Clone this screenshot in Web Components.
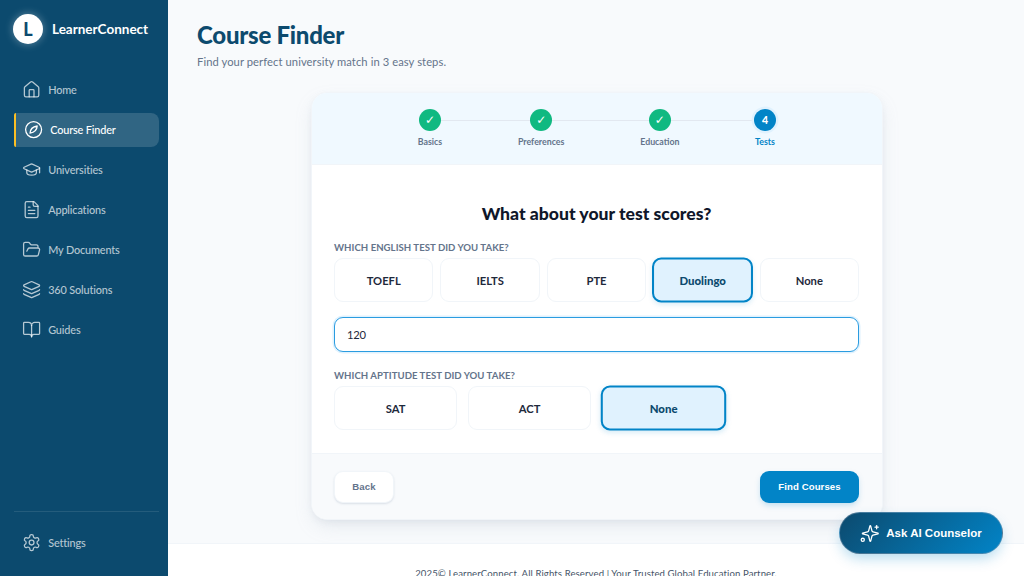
<!DOCTYPE html>
<html lang="en">
<head>
<meta charset="utf-8">
<title>Course Finder</title>
<style>
    html, body { margin: 0; height: 100%; overflow: hidden; }
    body { font-family: "Lato", "Noto Sans", sans-serif; background: #f8fafc; }
</style>
</head>
<body>
<app-shell>
    <side-bar slot="side">
        <nav-item icon="home">Home</nav-item>
        <nav-item icon="compass" active>Course Finder</nav-item>
        <nav-item icon="cap">Universities</nav-item>
        <nav-item icon="file">Applications</nav-item>
        <nav-item icon="folder">My Documents</nav-item>
        <nav-item icon="layers">360 Solutions</nav-item>
        <nav-item icon="book">Guides</nav-item>
        <nav-item slot="bottom" icon="gear">Settings</nav-item>
    </side-bar>
    <page-head title="Course Finder" sub="Find your perfect university match in 3 easy steps."></page-head>
    <finder-card>
        <step-bar slot="head">
            <step-dot label="Basics" state="done" style="width:24px"></step-dot>
            <step-dot label="Preferences" state="done" style="width:47px"></step-dot>
            <step-dot label="Education" state="done" style="width:39px"></step-dot>
            <step-dot label="Tests" n="4" state="current" style="width:20px"></step-dot>
        </step-bar>
        <choice-group label="Which English test did you take?" cols="5">
            <choice-btn>TOEFL</choice-btn>
            <choice-btn>IELTS</choice-btn>
            <choice-btn>PTE</choice-btn>
            <choice-btn selected>Duolingo</choice-btn>
            <choice-btn>None</choice-btn>
        </choice-group>
        <score-input value="120"></score-input>
        <choice-group label="Which aptitude test did you take?" cols="4">
            <choice-btn>SAT</choice-btn>
            <choice-btn>ACT</choice-btn>
            <choice-btn selected>None</choice-btn>
        </choice-group>
        <action-btn slot="foot">Back</action-btn>
        <action-btn slot="foot" primary>Find Courses</action-btn>
    </finder-card>
    <page-foot slot="foot">2025© LearnerConnect. All Rights Reserved | Your Trusted Global Education Partner.</page-foot>
    <ask-fab slot="fab">Ask AI Counselor</ask-fab>
</app-shell>

<script>
    const ICONS = {
        home: '<path d="M15 21v-8a1 1 0 0 0-1-1h-4a1 1 0 0 0-1 1v8"/><path d="M3 10a2 2 0 0 1 .709-1.528l7-5.999a2 2 0 0 1 2.582 0l7 5.999A2 2 0 0 1 21 10v9a2 2 0 0 1-2 2H5a2 2 0 0 1-2-2z"/>',
        compass: '<circle cx="12" cy="12" r="10"/><path d="M16.5 7.5c-.2 4.6-3.4 8-9 9 .2-4.6 3.4-8 9-9z"/>',
        cap: '<path d="M21.42 10.922a1 1 0 0 0-.019-1.838L12.83 5.18a2 2 0 0 0-1.66 0L2.6 9.08a1 1 0 0 0 0 1.832l8.57 3.908a2 2 0 0 0 1.66 0z"/><path d="M22 10v6"/><path d="M6 12.5V16a6 3 0 0 0 12 0v-3.5"/>',
        file: '<path d="M15 2H6a2 2 0 0 0-2 2v16a2 2 0 0 0 2 2h12a2 2 0 0 0 2-2V7Z"/><path d="M14 2v4a2 2 0 0 0 2 2h4"/><path d="M10 9H8"/><path d="M16 13H8"/><path d="M16 17H8"/>',
        folder: '<path d="m6 14 1.5-2.9A2 2 0 0 1 9.24 10H20a2 2 0 0 1 1.94 2.5l-1.54 6a2 2 0 0 1-1.95 1.5H4a2 2 0 0 1-2-2V5a2 2 0 0 1 2-2h3.9a2 2 0 0 1 1.69.9l.81 1.2a2 2 0 0 0 1.67.9H18a2 2 0 0 1 2 2v2"/>',
        layers: '<path d="M12.83 2.18a2 2 0 0 0-1.66 0L2.6 6.08a1 1 0 0 0 0 1.83l8.58 3.91a2 2 0 0 0 1.66 0l8.58-3.9a1 1 0 0 0 0-1.83z"/><path d="M2 12a1 1 0 0 0 .58.91l8.6 3.91a2 2 0 0 0 1.65 0l8.58-3.9A1 1 0 0 0 22 12"/><path d="M2 17a1 1 0 0 0 .58.91l8.6 3.91a2 2 0 0 0 1.65 0l8.58-3.9A1 1 0 0 0 22 17"/>',
        book: '<path d="M12 7v14"/><path d="M3 18a1 1 0 0 1-1-1V4a1 1 0 0 1 1-1h5a4 4 0 0 1 4 4 4 4 0 0 1 4-4h5a1 1 0 0 1 1 1v13a1 1 0 0 1-1 1h-6a3 3 0 0 0-3 3 3 3 0 0 0-3-3z"/>',
        gear: '<path d="M12.22 2h-.44a2 2 0 0 0-2 2v.18a2 2 0 0 1-1 1.73l-.43.25a2 2 0 0 1-2 0l-.15-.08a2 2 0 0 0-2.73.73l-.22.38a2 2 0 0 0 .73 2.73l.15.1a2 2 0 0 1 1 1.72v.51a2 2 0 0 1-1 1.74l-.15.09a2 2 0 0 0-.73 2.73l.22.38a2 2 0 0 0 2.73.73l.15-.08a2 2 0 0 1 2 0l.43.25a2 2 0 0 1 1 1.73V20a2 2 0 0 0 2 2h.44a2 2 0 0 0 2-2v-.18a2 2 0 0 1 1-1.73l.43-.25a2 2 0 0 1 2 0l.15.08a2 2 0 0 0 2.73-.73l.22-.39a2 2 0 0 0-.73-2.73l-.15-.08a2 2 0 0 1-1-1.74v-.5a2 2 0 0 1 1-1.74l.15-.09a2 2 0 0 0 .73-2.73l-.22-.38a2 2 0 0 0-2.73-.73l-.15.08a2 2 0 0 1-2 0l-.43-.25a2 2 0 0 1-1-1.73V4a2 2 0 0 0-2-2z"/><circle cx="12" cy="12" r="3"/>',
        spark: '<path d="M9.937 15.5A2 2 0 0 0 8.5 14.063l-6.135-1.582a.5.5 0 0 1 0-.962L8.5 9.936A2 2 0 0 0 9.937 8.5l1.582-6.135a.5.5 0 0 1 .963 0L14.063 8.5A2 2 0 0 0 15.5 9.937l6.135 1.581a.5.5 0 0 1 0 .964L15.5 14.063a2 2 0 0 0-1.437 1.437l-1.582 6.135a.5.5 0 0 1-.963 0z" transform="translate(1 0)"/><path d="M21 2v4"/><path d="M23 4h-4"/><circle cx="3.5" cy="20" r="2"/>'
    };

    // small helper so every element gets an open shadow root with its own styles
    function shadow(el, html) {
        el.attachShadow({mode: 'open'}).innerHTML = html;
    }

    customElements.define('app-shell', class extends HTMLElement {
        constructor () {
            super();
            shadow(this, `<style>
                :host { display: flex; height: 576px; overflow: hidden; position: relative; }
                main { flex: 1; min-width: 0; display: flex; flex-direction: column; padding-top: 20px; }
                .body { flex: none; height: 523px; display: flex; flex-direction: column; padding-left: 29px; padding-right: 27px; box-sizing: border-box; }
            </style>
            <slot name="side"></slot>
            <main>
                <div class="body"><slot></slot></div>
                <slot name="foot"></slot>
            </main>
            <slot name="fab"></slot>`);
        }
    });

    customElements.define('side-bar', class extends HTMLElement {
        constructor () {
            super();
            shadow(this, `<style>
                :host { display: flex; flex-direction: column; flex: none; width: 168px; height: 576px; box-sizing: border-box; background: #0c4a6e; padding: 14px 9px 16px 14px; }
                .brand { display: flex; align-items: center; gap: 9px; height: 30px; margin-left: -1px; }
                .logo { width: 30px; height: 30px; border-radius: 50%; background: #fff; color: #0c4a6e; display: flex; align-items: center; justify-content: center; font-weight: 900; font-size: 18px; box-shadow: 0 0 8px rgba(255,255,255,.35); }
                .name { color: #fff; font-weight: 700; font-size: 13.5px; }
                nav { display: flex; flex-direction: column; gap: 6px; margin-top: 29px; flex: 1; }
                .bottom { border-top: 1px solid rgba(255,255,255,.1); padding-top: 14px; }
            </style>
            <div class="brand"><div class="logo">L</div><div class="name">LearnerConnect</div></div>
            <nav><slot></slot></nav>
            <div class="bottom"><slot name="bottom"></slot></div>`);
        }
    });

    customElements.define('nav-item', class extends HTMLElement {
        constructor () {
            super();
            shadow(this, `<style>
                :host { display: flex; align-items: center; gap: 7.4px; height: 34px; box-sizing: border-box; padding-left: 7.6px; border-radius: 8px; color: rgba(255,255,255,.7); font-size: 10.9px; letter-spacing: -.15px; font-weight: 500; }
                :host([active]) { background: rgba(255,255,255,.15); border-left: 2.4px solid #fbbf24; border-radius: 2px 8px 8px 2px; color: #fff; }
                svg { width: 19.2px; height: 19.2px; flex: none; fill: none; stroke: currentColor; stroke-width: 1.6; stroke-linecap: round; stroke-linejoin: round; }
                span { margin-top: -2px; }
            </style>
            <svg viewBox="0 0 24 24">${ICONS[this.getAttribute('icon')]}</svg><span><slot></slot></span>`);
        }
    });

    customElements.define('page-head', class extends HTMLElement {
        constructor () {
            super();
            shadow(this, `<style>
                :host { display: block; height: 72px; }
                h1 { margin: 0; font-size: 24px; line-height: 30px; font-weight: 900; letter-spacing: -.25px; color: #0c4a6e; }
                p { margin: 4px 0 0; font-size: 11.2px; line-height: 16px; letter-spacing: .08px; color: #64748b; }
            </style>
            <h1>${this.getAttribute('title')}</h1><p>${this.getAttribute('sub')}</p>`);
        }
    });

    customElements.define('finder-card', class extends HTMLElement {
        constructor () {
            super();
            shadow(this, `<style>
                :host { display: flex; flex-direction: column; width: 572px; height: 428px; box-sizing: border-box; margin: 0 auto; overflow: hidden; background: #fff; border: 1px solid #f1f5f9; border-radius: 16px; box-shadow: 0 8px 20px -4px rgba(148,163,184,.22), 0 3px 8px -3px rgba(148,163,184,.2); }
                .head { height: 72px; flex: none; background: #f0f9ff; border-bottom: 1px solid #f1f5f9; box-sizing: border-box; display: flex; justify-content: center; padding: 16px 1px 0 0; }
                .body { flex: 1; padding: 0 23px 0 22px; }
                h2 { margin: 0; padding-top: 39px; height: 20px; line-height: 20px; text-align: center; font-size: 17.6px; font-weight: 900; color: #0f172a; }
                .foot { height: 66px; flex: none; box-sizing: border-box; background: #f8fafc; border-top: 1px solid #f1f5f9; padding: 0 23px 0 22px; display: flex; justify-content: space-between; align-items: center; }
            </style>
            <div class="head"><slot name="head"></slot></div>
            <div class="body"><h2>What about your test scores?</h2><slot></slot></div>
            <div class="foot"><slot name="foot"></slot></div>`);
        }
    });

    customElements.define('step-bar', class extends HTMLElement {
        constructor () {
            super();
            shadow(this, `<style>
                :host { display: flex; justify-content: space-between; width: 357px; height: 40px; position: relative; }
                .line { position: absolute; left: 12px; right: 10px; top: 11px; height: 1px; background: #e2e8f0; }
                ::slotted(*) { position: relative; }
            </style>
            <div class="line"></div><slot></slot>`);
        }
    });

    customElements.define('step-dot', class extends HTMLElement {
        constructor () {
            super();
            const current = this.getAttribute('state') === 'current';
            shadow(this, `<style>
                :host { display: flex; flex-direction: column; align-items: center; font-size: 8.8px; font-weight: 700; color: ${current ? '#0284c7' : '#64748b'}; }
                .dot { flex: none; width: 22px; height: 22px; border-radius: 50%; display: flex; align-items: center; justify-content: center; color: #fff; font-size: 10.5px; font-weight: 900; background: ${current ? '#0284c7' : '#10b981'}; ${current ? 'box-shadow: 0 0 0 2.4px #e0f2fe;' : ''} }
                .dot.done { font: 700 12px "DejaVu Sans", sans-serif; }
                .label { margin-top: 4px; line-height: 13px; white-space: nowrap; }
            </style>
            <div class="dot ${current ? '' : 'done'}">${current ? this.getAttribute('n') : '✓'}</div>
            <div class="label">${this.getAttribute('label')}</div>`);
        }
    });

    customElements.define('choice-group', class extends HTMLElement {
        constructor () {
            super();
            const cols = this.getAttribute('cols');
            shadow(this, `<style>
                :host { display: block; margin-top: 17px; }
                .label { font-size: 9.6px; line-height: 14px; font-weight: 700; letter-spacing: .04px; text-transform: uppercase; color: #64748b; margin-bottom: 3px; }
                .grid { display: grid; grid-template-columns: repeat(${cols}, 1fr); gap: ${cols === '5' ? '7px' : '10.67px'}; }
            </style>
            <div class="label">${this.getAttribute('label')}</div>
            <div class="grid"><slot></slot></div>`);
        }
    });

    customElements.define('choice-btn', class extends HTMLElement {
        constructor () {
            super();
            shadow(this, `<style>
                :host { display: flex; align-items: center; justify-content: center; height: 44px; box-sizing: border-box; background: #fff; border: 1px solid #f1f5f9; border-radius: 9px; font-size: 11.2px; font-weight: 700; color: #1e293b; }
                :host([selected]) { background: #e0f2fe; border: 2px solid #0284c7; color: #0c4a6e; font-weight: 900; transform: scale(1.02); box-shadow: 0 2px 5px rgba(2,132,199,.15); }
            </style><slot></slot>`);
        }
    });

    customElements.define('score-input', class extends HTMLElement {
        constructor () {
            super();
            shadow(this, `<style>
                :host { display: block; margin-top: 15px; }
                input { display: block; width: 100%; height: 35px; box-sizing: border-box; padding: 0 12px; border: 1px solid #2b9ce0; border-radius: 9px; outline: none; background: #fff; font: 400 11.2px "Lato", "Noto Sans", sans-serif; letter-spacing: -.3px; color: #1e293b; box-shadow: 0 0 0 1.5px #e0f2fe; }
            </style><input type="text" value="${this.getAttribute('value')}">`);
        }
    });

    customElements.define('action-btn', class extends HTMLElement {
        constructor () {
            super();
            shadow(this, `<style>
                :host { display: flex; align-items: center; justify-content: center; height: 32px; width: 60px; box-sizing: border-box; background: #fff; border: 1px solid #f1f5f9; border-radius: 9px; font: 700 9.6px "Liberation Sans", sans-serif; letter-spacing: .1px; color: #64748b; box-shadow: 0 1px 2px rgba(148,163,184,.3); }
                :host([primary]) { width: 99px; background: #0284c7; border: 0; color: #fff; box-shadow: 0 3px 6px -1px rgba(2,132,199,.25); }
            </style><slot></slot>`);
        }
    });

    customElements.define('page-foot', class extends HTMLElement {
        constructor () {
            super();
            shadow(this, `<style>
                :host { display: block; flex: none; height: 60px; box-sizing: border-box; background: #fff; border-top: 1px solid #f1f5f9; padding-top: 23px; text-align: center; font-size: 9.6px; line-height: 14px; letter-spacing: .09px; color: #475569; }
            </style><slot></slot>`);
        }
    });

    customElements.define('ask-fab', class extends HTMLElement {
        constructor () {
            super();
            shadow(this, `<style>
                :host { position: absolute; left: 839px; top: 512px; width: 164px; height: 42px; box-sizing: border-box; display: flex; align-items: center; justify-content: center; gap: 7px; border-radius: 21px; background: linear-gradient(135deg, #0c4a6e, #0284c7); border: 1px solid rgba(148,163,184,.45); color: #fff; font: 700 11.5px "Liberation Sans", sans-serif; box-shadow: 0 6px 14px -2px rgba(2,132,199,.3); }
                svg { width: 19px; height: 19px; fill: none; stroke: #fff; stroke-width: 1.6; stroke-linecap: round; stroke-linejoin: round; }
            </style><svg viewBox="0 0 24 24">${ICONS.spark}</svg><slot></slot>`);
        }
    });
</script>
</body>
</html>
